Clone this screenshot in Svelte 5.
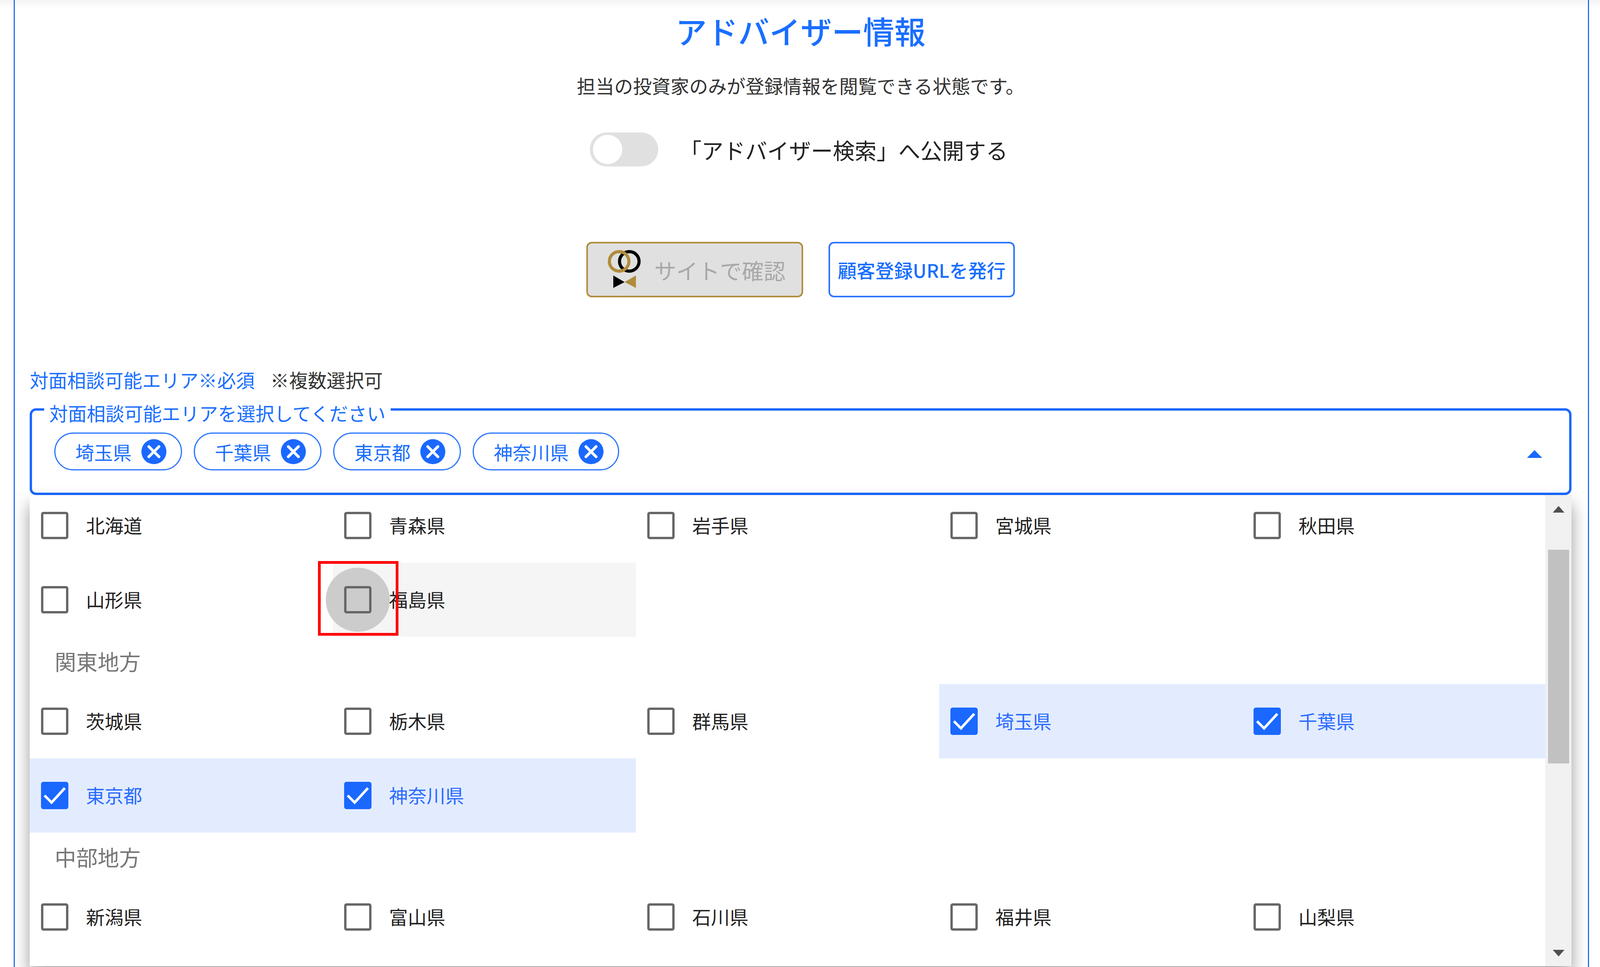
<script>
  const chips = ['埼玉県', '千葉県', '東京都', '神奈川県'];

  const groups = [
    { items: ['北海道', '青森県', '岩手県', '宮城県', '秋田県', '山形県', '福島県'] },
    { title: '関東地方', items: ['茨城県', '栃木県', '群馬県', '埼玉県', '千葉県', '東京都', '神奈川県'] },
    { title: '中部地方', items: ['新潟県', '富山県', '石川県', '福井県', '山梨県'] }
  ];

  const hovered = '福島県';
</script>

<div class="screen">
  <main class="page">
    <h1>アドバイザー情報</h1>
    <p class="lead">担当の投資家のみが登録情報を閲覧できる状態です。</p>

    <div class="publish">
      <span class="toggle"><span class="thumb"></span></span>
      <span class="publish-label">「アドバイザー検索」へ公開する</span>
    </div>

    <div class="actions">
      <button class="btn-site" disabled>
        <svg class="logo" viewBox="0 0 96 104" width="96" height="104">
          <circle cx="60" cy="31" r="25" fill="none" stroke="#000" stroke-width="8" />
          <circle cx="34" cy="31" r="25" fill="none" stroke="#b08d3c" stroke-width="8" />
          <path d="M19 67 L48 84 L19 99 Z" fill="#000" />
          <path d="M77 67 L48 84 L77 99 Z" fill="#b08d3c" />
        </svg>
        <span>サイトで確認</span>
      </button>
      <button class="btn-url">顧客登録URLを発行</button>
    </div>

    <div class="field-label">
      <span class="required">対面相談可能エリア※必須</span>
      <span class="hint">※複数選択可</span>
    </div>

    <div class="select">
      <span class="legend">対面相談可能エリアを選択してください</span>
      {#each chips as chip}
        <span class="chip">
          <span>{chip}</span>
          <svg viewBox="0 0 64 64" width="64" height="64">
            <circle cx="32" cy="32" r="32" fill="#1a68ff" />
            <path d="M19 19 L45 45 M45 19 L19 45" stroke="#fff" stroke-width="7" stroke-linecap="round" />
          </svg>
        </span>
      {/each}
      <svg class="caret" viewBox="0 0 39 20" width="39" height="20">
        <path d="M19.5 0 L39 20 L0 20 Z" fill="#1a68ff" />
      </svg>
    </div>

    <div class="panel">
      <div class="list">
        {#each groups as group}
          {#if group.title}
            <div class="group-title">{group.title}</div>
          {/if}
          <div class="grid">
            {#each group.items as item}
              <div class="item" class:checked={chips.includes(item)} class:hover={item === hovered}>
                {#if item === hovered}
                  <span class="ripple"></span>
                  <span class="marker"></span>
                {/if}
                <span class="box">
                  {#if chips.includes(item)}
                    <svg viewBox="0 0 70 70" width="70" height="70">
                      <path d="M9 35 L27 53 L61 16" fill="none" stroke="#fff" stroke-width="6.5" />
                    </svg>
                  {/if}
                </span>
                <span class="name">{item}</span>
              </div>
            {/each}
          </div>
        {/each}
      </div>

      <div class="scrollbar">
        <svg class="arrow-up" viewBox="0 0 30 17" width="30" height="17"><path d="M15 0 L30 17 L0 17 Z" fill="#505050" /></svg>
        <span class="scroll-thumb"></span>
        <svg class="arrow-down" viewBox="0 0 30 17" width="30" height="17"><path d="M0 0 L30 0 L15 17 Z" fill="#505050" /></svg>
      </div>
    </div>
  </main>
</div>

<style>
  :global(body) {
    margin: 0;
    background: #fff;
  }

  .screen {
    height: 2475px;
    overflow: hidden;
    padding: 0 28px 0 35px;
    background: linear-gradient(#f4f4f4, #fff 22px);
    font-family: "Noto Sans CJK JP", "Noto Sans", sans-serif;
    color: #222;
  }

  .page {
    box-sizing: border-box;
    height: 2475px;
    padding: 27px 42px 0 38px;
    border-left: 3px solid #2a6ff5;
    border-right: 3px solid #2a6ff5;
  }

  h1 {
    margin: 0;
    font-size: 80px;
    line-height: 100px;
    font-weight: 500;
    text-align: center;
    color: #1a6eff;
  }

  .lead {
    margin: 55px 0 0;
    font-size: 48px;
    line-height: 72px;
    text-align: center;
    color: #333;
  }

  .publish {
    display: flex;
    justify-content: center;
    align-items: center;
    gap: 55px;
    height: 87px;
    margin-top: 85px;
    padding-right: 9px;
  }

  .toggle {
    box-sizing: border-box;
    width: 175px;
    height: 87px;
    padding: 6px 8px;
    border-radius: 44px;
    background: #e0e0e0;
  }

  .thumb {
    display: block;
    width: 75px;
    height: 75px;
    border-radius: 50%;
    background: #fff;
  }

  .publish-label {
    font-size: 56px;
    color: #222;
  }

  .actions {
    display: flex;
    justify-content: center;
    gap: 65px;
    margin-top: 193px;
  }

  button {
    box-sizing: border-box;
    height: 142px;
    border-radius: 14px;
    font-family: inherit;
    padding: 0;
  }

  .btn-site {
    display: flex;
    align-items: center;
    width: 555px;
    padding-left: 46px;
    border: 4px solid #b08d3c;
    background: #e0e0e0;
    color: #a8a8a8;
    font-size: 56px;
  }

  .btn-site span {
    margin-left: 28px;
  }

  .logo {
    flex: none;
  }

  .btn-url {
    width: 477px;
    border: 4px solid #2a75ff;
    background: #fff;
    color: #1a6eff;
    font-size: 48px;
    font-weight: 500;
  }

  .field-label {
    display: flex;
    gap: 40px;
    margin-top: 176px;
    font-size: 48px;
    line-height: 68px;
  }

  .required {
    color: #1a6eff;
  }

  .hint {
    color: #333;
  }

  .select {
    position: relative;
    box-sizing: border-box;
    display: flex;
    align-items: flex-start;
    gap: 30px;
    height: 222px;
    margin-top: 40px;
    padding: 56px 0 0 57px;
    border: 6px solid #1a68ff;
    border-radius: 16px;
    background: #fff;
  }

  .legend {
    position: absolute;
    left: 31px;
    top: -25px;
    padding: 0 13px;
    font-size: 48px;
    line-height: 60px;
    color: #1a6eff;
    background: #fff;
  }

  .chip {
    box-sizing: border-box;
    display: flex;
    align-items: center;
    gap: 25px;
    height: 97px;
    padding: 0 37px 0 51px;
    border: 3px solid #2a75ff;
    border-radius: 49px;
    font-size: 48px;
    color: #1a6eff;
  }

  .caret {
    margin: 45px 69px 0 auto;
  }

  .panel {
    display: flex;
    height: 1206px;
    background: #fff;
    box-shadow: 0 24px 40px rgba(0, 0, 0, 0.4);
    position: relative;
  }

  .list {
    flex: 1;
    min-width: 0;
    overflow: hidden;
  }

  .list > :first-child {
    margin-top: -17px;
  }

  .grid {
    display: grid;
    grid-template-columns: repeat(5, 1fr);
    grid-auto-rows: 190px;
  }

  .group-title {
    display: flex;
    align-items: center;
    height: 121px;
    padding-left: 64px;
    font-size: 55px;
    color: #777;
  }

  .item {
    position: relative;
    display: flex;
    align-items: center;
    gap: 45px;
    padding-left: 29px;
  }

  .item.hover {
    background: #f5f5f5;
  }

  .item.checked {
    background: #e3ecff;
  }

  .box {
    position: relative;
    box-sizing: border-box;
    flex: none;
    width: 70px;
    height: 70px;
    border: 6px solid #676767;
    border-radius: 6px;
  }

  .box svg {
    position: absolute;
    left: -6px;
    top: -6px;
  }

  .item.checked .box {
    border-color: #1a68ff;
    background: #1a68ff;
  }

  .name {
    position: relative;
    top: -2px;
    font-size: 48px;
    color: #222;
  }

  .item.checked .name {
    color: #2a6bff;
  }

  .ripple {
    position: absolute;
    left: -18px;
    top: 13px;
    width: 164px;
    height: 164px;
    border-radius: 50%;
    background: #ccc;
  }

  .marker {
    position: absolute;
    z-index: 2;
    left: -38px;
    top: -4px;
    box-sizing: border-box;
    width: 206px;
    height: 191px;
    border: 7px solid #f00;
  }

  .scrollbar {
    flex: none;
    display: flex;
    flex-direction: column;
    align-items: center;
    width: 67px;
    background: #f1f1f1;
  }

  .arrow-up {
    margin-top: 28px;
  }

  .scroll-thumb {
    width: 54px;
    height: 547px;
    margin-top: 95px;
    background: #c1c1c1;
  }

  .arrow-down {
    margin-top: auto;
    margin-bottom: 25px;
  }
</style>
